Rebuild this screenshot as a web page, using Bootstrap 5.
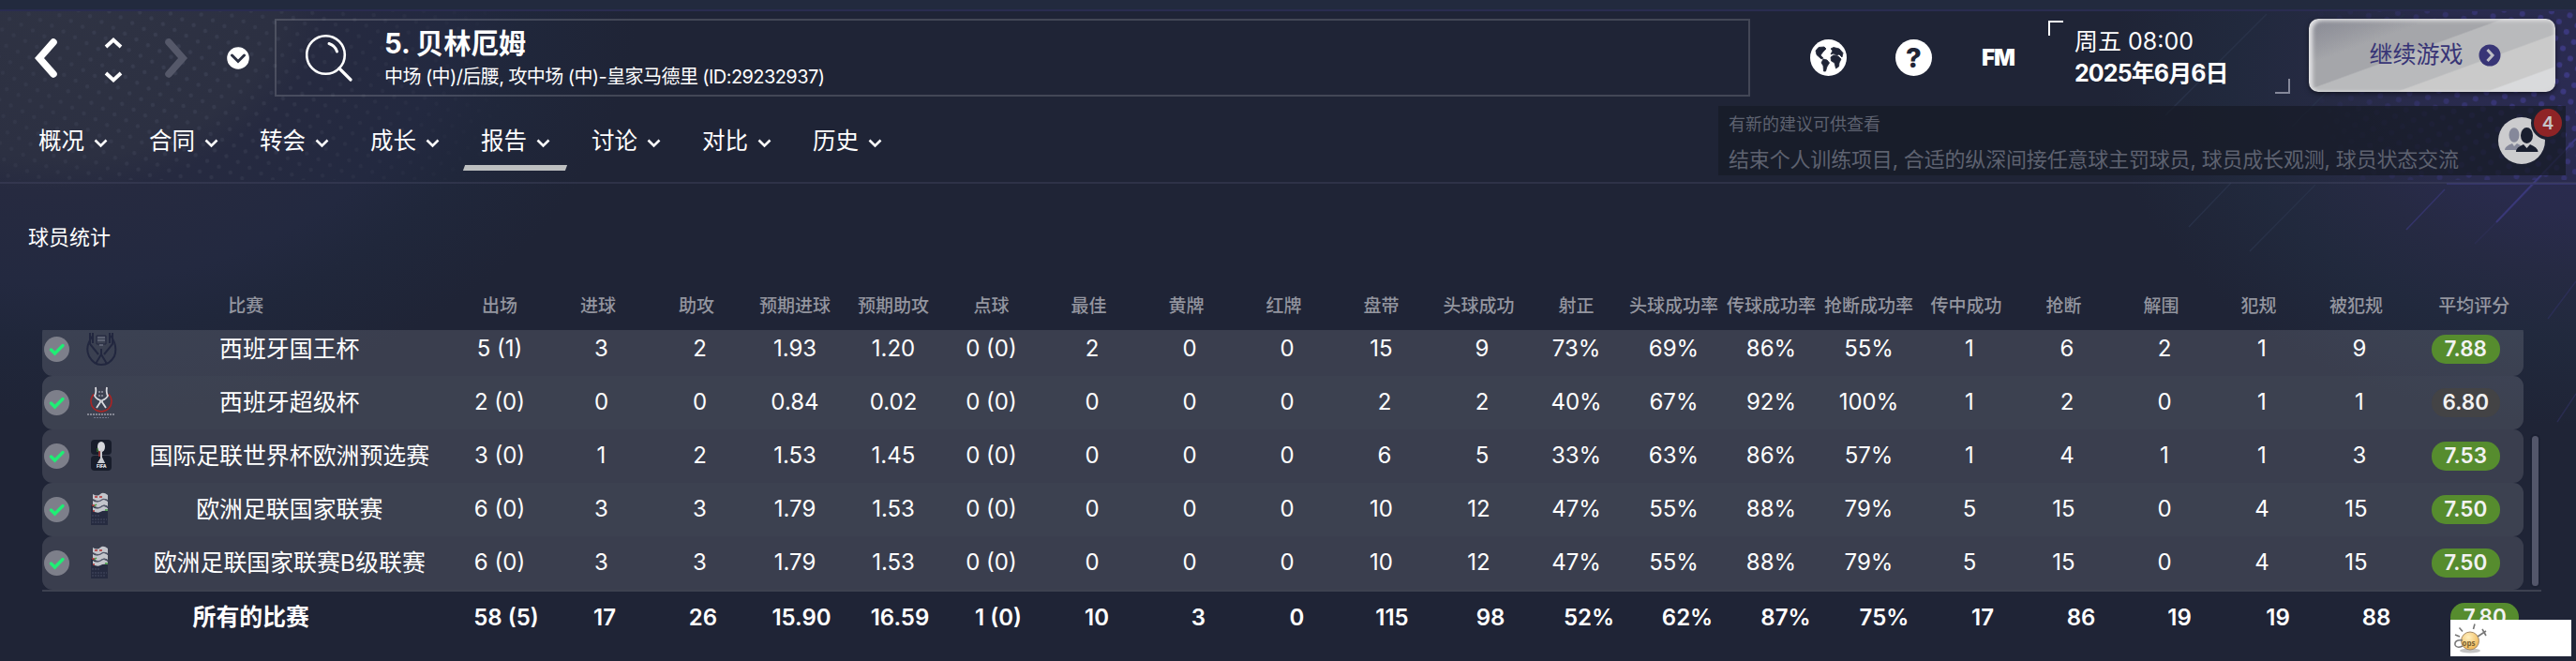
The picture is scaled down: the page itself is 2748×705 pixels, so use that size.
<!DOCTYPE html>
<html lang="zh-CN">

<head>
    <meta charset="UTF-8">
    <meta name="viewport" content="width=device-width, initial-scale=1.0">
    <title>球员统计</title>
    <link href="https://cdn.jsdelivr.net/npm/bootstrap@5.3.0/dist/css/bootstrap.min.css" rel="stylesheet">
    <style>
        body {
            width: 2748px;
            height: 705px;
            overflow: hidden;
            background-color: #1f2436;
            color: #fff;
            font-family: Inter, "Noto Sans CJK SC", sans-serif;
            font-size: 25px;
            line-height: 1;
        }

        svg {
            display: block;
            flex: none;
        }

        .backdrop {
            position: absolute;
            inset: 0;
            z-index: -1;
        }

        .top-strip {
            height: 12px;
            background: #222a3e;
            border-bottom: 2px solid #2a2c50;
        }

        .app-header {
            height: 184px;
            padding-top: 8px;
            border-bottom: 2px solid rgba(70, 72, 100, .4);
        }

        .tool-row {
            height: 83px;
            padding-left: 37px;
        }

        .icon-updown {
            margin: 4px 45px 0 50px;
        }

        .icon-history {
            margin-left: 42px;
        }

        .icon-world {
            margin: 0 52px 0 64px;
        }

        .search-box {
            width: 1574px;
            height: 83px;
            margin-left: 27px;
            padding-left: 31px;
            gap: 34px;
            border: 2px solid rgba(255, 255, 255, .16);
        }

        .player-name {
            font-size: 29.3px;
            line-height: 36px;
            font-weight: 700;
        }

        .player-info {
            font-size: 20px;
            line-height: 26px;
            margin-top: 4px;
            letter-spacing: -.58px;
        }

        .round-icon {
            width: 39px;
            height: 39px;
            border-radius: 50%;
            background: #fff;
            color: #1f2436;
            font-weight: 800;
            font-size: 29px;
        }

        .fm-logo {
            width: 38px;
            margin-left: 53px;
            font-size: 24px;
            font-weight: 900;
            letter-spacing: -1px;
        }

        .date-box {
            width: 258px;
            height: 79px;
            margin-left: 33px;
            padding: 7px 0 0 28px;
            line-height: 34px;
            position: relative;
        }

        .date-day {
            font-weight: 700;
            letter-spacing: -.9px;
        }

        .date-box::before,
        .date-box::after {
            content: '';
            position: absolute;
            width: 16px;
            height: 16px;
        }

        .date-box::before {
            left: 0;
            top: 2px;
            border-top: 2px solid #fff;
            border-left: 2px solid #fff;
        }

        .date-box::after {
            right: 0;
            bottom: -1px;
            border-right: 2px solid #85889a;
            border-bottom: 2px solid #85889a;
        }

        .btn-continue {
            width: 263px;
            height: 78px;
            margin-left: 20px;
            padding-left: 18px;
            border: 0;
            border-radius: 10px;
            color: #383576;
            font-size: 25px;
            gap: 16px;
            background: linear-gradient(160deg, #85879380 0%, #85879300 28%), linear-gradient(160deg, #8f9098 0%, #a5a6aa 28%, #a5a6aa 43%, #b9babc 44%, #b9babc 64%, #cacaca 65%, #cacaca 84%, #d9dadc 85%);
            box-shadow: inset 4px 2px 4px #e2e2e4, inset -2px -1px 3px #d8d8da, 0 2px 5px rgba(0, 0, 0, .5);
        }

        .tab-row {
            height: 91px;
            padding-left: 23px;
        }

        .tab-link {
            width: 110px;
            margin-right: 8px;
            height: 71px;
            padding-top: 23px;
            gap: 10px;
            line-height: 48px;
            font-size: 24.5px;
            color: #fff;
            position: relative;
        }

        .tab-link svg {
            margin-top: 22px;
        }

        .tab-link.active::after {
            content: '';
            position: absolute;
            left: 0;
            top: 73px;
            width: 109px;
            height: 6px;
            background: #bdbfc0;
            transform: skewX(-20deg);
        }

        .advice-box {
            width: 904px;
            height: 74px;
            margin: 10px 11px 0 auto;
            padding: 0 22px 0 11px;
            background: rgba(22, 27, 38, .72);
            color: #5e6270;
        }

        .advice-title {
            font-size: 18px;
            line-height: 30px;
            margin-top: 5px;
        }

        .advice-text {
            font-size: 22px;
            line-height: 40px;
            margin-top: 2px;
            letter-spacing: -.17px;
        }

        .staff-icon {
            position: relative;
        }

        .staff-count {
            position: absolute;
            left: 38px;
            top: -9px;
            width: 30px;
            height: 30px;
            border-radius: 50%;
            background: #8f2426;
            box-shadow: 0 0 0 3px #1d2030;
            color: #c5c5c8;
            font-size: 19px;
            font-weight: 600;
        }

        .section-title {
            font-size: 22px;
            line-height: 30px;
            padding-left: 30px;
            margin-top: 42px;
        }

        .stat-grid {
            display: grid;
            grid-template-columns: 30px 66px 339.5px repeat(5, 105px) repeat(15, 104px) 1fr;
            width: 2647px;
            align-items: center;
            text-align: center;
            white-space: nowrap;
        }

        .stat-table {
            margin-left: 45px;
        }

        .stat-head {
            height: 44px;
            margin-top: 36px;
            margin-bottom: 4px;
            font-size: 19px;
            font-weight: 500;
            color: #93959f;
        }

        .head-name {
            padding-right: 97px;
        }

        .head-rating {
            padding-left: 21px;
        }

        .stat-scroll {
            height: 277px;
            overflow: hidden;
        }

        .stat-list {
            margin-top: -8px;
            width: 2647px;
        }

        .stat-row {
            height: 57px;
            padding-bottom: 1px;
            border-radius: 11px;
            font-size: 24px;
            background: rgba(255, 255, 255, .12);
        }

        .stat-row:nth-child(even) {
            background: rgba(255, 255, 255, .133);
        }

        .comp-name {
            font-size: 24.9px;
            padding-right: 4px;
        }

        .one-digit {
            padding-left: 7px;
        }

        .rating-pill {
            display: inline-block;
            width: 73px;
            height: 31px;
            border-radius: 15px;
            background: #568c2e;
            color: #f2f2f2;
            font-size: 22.5px;
            font-weight: 600;
            line-height: 30px;
            margin-left: 3px;
        }

        .rating-pill.average {
            background: #434345;
        }

        .scroll-thumb {
            width: 7px;
            height: 160px;
            margin: 113px 0 0 9px;
            border-radius: 4px;
            background: #53566a;
            box-shadow: 0 0 0 2px #1b2032;
        }

        .stat-total {
            grid-template-columns: 442.5px repeat(20, 105px) 1fr;
            width: 2666px;
            height: 59px;
            padding-bottom: 2px;
            border-top: 2px solid #3d4150;
            font-weight: 600;
            font-size: 24px;
        }

        .stat-total .comp-name {
            font-weight: 700;
            padding: 0 0 0 3px;
        }

        .ops-tip {
            position: absolute;
            left: 2614px;
            top: 661px;
            width: 129px;
            height: 39px;
            background: #fff;
        }
    </style>
</head>

<body class="position-relative">

    <svg class="backdrop" width="2748" height="705" viewBox="0 0 2748 705">
        <defs>
            <radialGradient id="washLeft" gradientUnits="userSpaceOnUse" cx="60" cy="0" r="620" gradientTransform="scale(1 .72)">
                <stop offset="0" stop-color="#2f3343" />
                <stop offset=".38" stop-color="#2c3042" />
                <stop offset=".46" stop-color="#262a40" />
                <stop offset=".68" stop-color="#232940" />
                <stop offset=".8" stop-color="#20273b" />
                <stop offset="1" stop-color="#1f2436" />
            </radialGradient>
            <radialGradient id="glowRight" gradientUnits="userSpaceOnUse" cx="2770" cy="90" r="520" gradientTransform="translate(0 27) scale(1 .7)">
                <stop offset="0" stop-color="#2b2b53" />
                <stop offset=".38" stop-color="#292b4c" />
                <stop offset=".55" stop-color="#262a43" />
                <stop offset=".75" stop-color="#21293d" />
                <stop offset="1" stop-color="#1f2436" />
            </radialGradient>
            <radialGradient id="fadeLeft" gradientUnits="userSpaceOnUse" cx="180" cy="50" r="380">
                <stop offset="0" stop-color="#fff" />
                <stop offset="1" stop-color="#000" />
            </radialGradient>
            <radialGradient id="fadeRight" gradientUnits="userSpaceOnUse" cx="2748" cy="70" r="290">
                <stop offset=".1" stop-color="#fff" />
                <stop offset="1" stop-color="#000" />
            </radialGradient>
            <mask id="maskLeft"><rect y="12" width="700" height="180" fill="url(#fadeLeft)" /></mask>
            <mask id="maskRight"><rect x="2440" y="12" width="308" height="180" fill="url(#fadeRight)" /></mask>
            <pattern id="dotsLeft" width="21" height="18" patternUnits="userSpaceOnUse" patternTransform="rotate(-14)">
                <circle cx="5" cy="4" r="2.2" fill="#41465a" />
                <circle cx="15.5" cy="13" r="2.2" fill="#41465a" />
            </pattern>
            <pattern id="dotsRight" width="20" height="18" patternUnits="userSpaceOnUse" patternTransform="rotate(12)">
                <circle cx="5" cy="4" r="3" fill="#3c3980" />
                <circle cx="15" cy="13" r="3" fill="#3c3980" />
            </pattern>
        </defs>
        <rect width="700" height="450" fill="url(#washLeft)" />
        <rect x="2200" width="548" height="480" fill="url(#glowRight)" />
        <rect width="700" height="194" fill="url(#dotsLeft)" mask="url(#maskLeft)" opacity=".6" />
        <rect x="2440" width="308" height="194" fill="url(#dotsRight)" mask="url(#maskRight)" />
        <g stroke="#34346a" stroke-width="1.5" fill="none">
            <path d="M2748 148L2663 237" stroke="#3b397c" stroke-width="2" />
            <path d="M2608 202L2567 245" />
            <path d="M2748 152L2640 260" opacity=".3" />
            <path d="M2418 15L2310 123M2470 197L2400 268M2380 195L2335 242M2565 15L2445 135" stroke="#283148" />
            <path d="M2748 300L2718 340M2748 420L2728 450" opacity=".5" />
            <path d="M2748 196H2610" stroke-width="2" />
        </g>
    </svg>

    <div class="top-strip"></div>

    <header class="app-header">
        <div class="tool-row d-flex align-items-center">
            <svg width="24" height="42" viewBox="0 0 24 42"><path d="M20 4L5 21L20 38" fill="none" stroke="#fff" stroke-width="7.5" stroke-linecap="round" /></svg>
            <svg class="icon-updown" width="20" height="50" viewBox="0 0 20 50"><path d="M2 11L10 3.500L18 11M2 39L10 46.500L18 39" fill="none" stroke="#fff" stroke-width="3.800" /></svg>
            <svg width="24" height="42" viewBox="0 0 24 42"><path d="M4 4L19 21L4 38" fill="none" stroke="#555869" stroke-width="7.5" stroke-linecap="round" /></svg>
            <svg class="icon-history" width="24" height="24" viewBox="0 0 24 24"><circle cx="12" cy="12" r="11.800" fill="#fff" /><path d="M5.500 9L12 15.500L18.500 9" fill="none" stroke="#2b3042" stroke-width="3" stroke-linecap="round" /></svg>

            <div class="search-box d-flex align-items-center">
                <svg width="50" height="51" viewBox="0 0 50 51">
                    <circle cx="21.500" cy="22.500" r="20.300" fill="none" stroke="#fff" stroke-width="2.600" />
                    <path d="M36 37L48 49" stroke="#fff" stroke-width="3.200" stroke-linecap="round" />
                    <path d="M25 10.500Q31.500 12.500 33.500 19" fill="none" stroke="#fff" stroke-width="3" stroke-linecap="round" />
                </svg>
                <div>
                    <div class="player-name">5. 贝林厄姆</div>
                    <div class="player-info">中场 (中)/后腰, 攻中场 (中)-皇家马德里 (ID:29232937)</div>
                </div>
            </div>

            <svg class="icon-world" width="39" height="39" viewBox="0 0 39 39">
                <circle cx="19.500" cy="19.500" r="19.500" fill="#fff" />
                <path d="M6 12L9 8.500L15 8L17 10L14 13L12.500 15L11 17L14 20L12 21L7 16.500ZM14 21L18 22L20.500 25L18 29L16.500 34L14.500 34L14 28L12 25ZM22 10L25 8.500L31 10L35 14.500L34 19L31 16L28 17L25 15L22 16L24 12ZM22 19L25 16.800L30 18L33 21L31 25L30.500 29L27.500 31L26 25L22.500 23Z" fill="#1f2436" stroke="#1f2436" stroke-width=".8" stroke-linejoin="round" />
            </svg>
            <div class="round-icon d-flex align-items-center justify-content-center">?</div>
            <div class="fm-logo">FM</div>
            <div class="date-box align-self-start">
                <div>周五 08:00</div>
                <div class="date-day">2025年6月6日</div>
            </div>
            <button type="button" class="btn btn-continue d-flex align-items-center justify-content-center align-self-start">
                继续游戏
                <svg width="24" height="24" viewBox="0 0 24 24"><circle cx="12" cy="12" r="11.500" fill="#383576" /><path d="M9.500 6L15 12L9.500 18" fill="none" stroke="#bcbcc4" stroke-width="3" /></svg>
            </button>
        </div>

        <div class="tab-row d-flex">
            <nav class="d-flex" id="tabs"></nav>
            <div class="advice-box d-flex justify-content-between">
                <div>
                    <div class="advice-title">有新的建议可供查看</div>
                    <div class="advice-text">结束个人训练项目, 合适的纵深间接任意球主罚球员, 球员成长观测, 球员状态交流</div>
                </div>
                <div class="staff-icon align-self-center">
                    <svg width="50" height="50" viewBox="0 0 50 50">
                        <circle cx="25" cy="25" r="25" fill="#ccccce" />
                        <ellipse cx="17" cy="19" rx="5.500" ry="7.800" fill="#85889a" />
                        <path d="M7 35Q7 31 15 28L17 31L20 28L24 30L20 35Z" fill="#85889a" />
                        <ellipse cx="30.500" cy="19.500" rx="6.500" ry="8.500" fill="#191e2e" />
                        <path d="M19 37Q19 32 27 29L30.500 33L34 29Q42 32 42.500 37Z" fill="#191e2e" />
                    </svg>
                    <span class="staff-count d-flex align-items-center justify-content-center">4</span>
                </div>
            </div>
        </div>
    </header>

    <main>
        <div class="section-title">球员统计</div>

        <div class="stat-table">
            <div class="stat-grid stat-head" id="statHead"></div>
            <div class="stat-scroll d-flex">
                <div class="stat-list" id="statList"></div>
                <div class="scroll-thumb"></div>
            </div>
            <div class="stat-grid stat-total" id="statTotal"></div>
        </div>
    </main>

    <div class="ops-tip">
        <svg width="45" height="39" viewBox="0 0 45 39">
            <defs>
                <radialGradient id="bulb" cx=".4" cy=".3" r=".7">
                    <stop offset="0" stop-color="#fff0c0" />
                    <stop offset="1" stop-color="#f0b757" />
                </radialGradient>
            </defs>
            <ellipse cx="21" cy="33" rx="11" ry="2.500" fill="#c4c4c4" />
            <circle cx="21" cy="22.500" r="9.500" fill="url(#bulb)" stroke="#a48b6a" />
            <path d="M5 16L10 18M9.500 8.500L13 12.500M26 4.500L24.500 10M29 18L38 12M34 10L38 17" stroke="#777" stroke-width="1.600" fill="none" />
            <path d="M13 22Q4 21 5 27Q7 31 13 28" stroke="#777" stroke-width="1.500" fill="none" />
            <text x="12.500" y="28" font-size="8" font-weight="700" fill="#7a6232" font-family="Open Sans">ops</text>
        </svg>
    </div>

    <script src="https://cdn.jsdelivr.net/npm/bootstrap@5.3.0/dist/js/bootstrap.bundle.min.js"></script>
    <script>
        const tabs = ['概况', '合同', '转会', '成长', '报告', '讨论', '对比', '历史'];

        const columns = ['出场', '进球', '助攻', '预期进球', '预期助攻', '点球', '最佳', '黄牌', '红牌', '盘带', '头球成功', '射正',
            '头球成功率', '传球成功率', '抢断成功率', '传中成功', '抢断', '解围', '犯规', '被犯规'];

        const rows = [
            ['copa', '西班牙国王杯', '5 (1)|3|2|1.93|1.20|0 (0)|2|0|0|15|9|73%|69%|86%|55%|1|6|2|1|9', '7.88'],
            ['super', '西班牙超级杯', '2 (0)|0|0|0.84|0.02|0 (0)|0|0|0|2|2|40%|67%|92%|100%|1|2|0|1|1', '6.80'],
            ['fifa', '国际足联世界杯欧洲预选赛', '3 (0)|1|2|1.53|1.45|0 (0)|0|0|0|6|5|33%|63%|86%|57%|1|4|1|1|3', '7.53'],
            ['nations', '欧洲足联国家联赛', '6 (0)|3|3|1.79|1.53|0 (0)|0|0|0|10|12|47%|55%|88%|79%|5|15|0|4|15', '7.50'],
            ['nations', '欧洲足联国家联赛B级联赛', '6 (0)|3|3|1.79|1.53|0 (0)|0|0|0|10|12|47%|55%|88%|79%|5|15|0|4|15', '7.50']
        ];

        const total = '58 (5)|17|26|15.90|16.59|1 (0)|10|3|0|115|98|52%|62%|87%|75%|17|86|19|19|88';

        const crests = {
            copa: '<g fill="none" stroke="#22273f" stroke-width="2"><path d="M8 4Q-1 16 4 26Q9 35 17 35Q26 35 31 26Q35 15 27 4"/><path d="M5 1V13L14 24M29 1V13L20 24M8 1V12M26 1V12M17 18V24L11 34M17 24L23 34"/><path d="M12 4H22V13H12Z" stroke-width="1"/></g><path d="M13 6H21M13 9H21M15 14H19" stroke="#686c7e" stroke-width="1.500"/>',
            super: '<circle cx="17" cy="17" r="11" fill="none" stroke="#a82525" stroke-width="1.600"/><path d="M9 1H25V10H9Z" fill="#3c4050"/><path d="M11 2Q12 8 10 11Q11 14 16 16V18L12 24M23 2Q22 8 24 11Q23 14 18 16V18L22 24" fill="none" stroke="#dadbe0" stroke-width="1.800"/><path d="M14 7H20M14 11H20" stroke="#9497a3" stroke-width="1.500" stroke-dasharray="2 1"/><path d="M2 31H32" stroke="#9a9ca8" stroke-width="1.600" stroke-dasharray="2 1"/><path d="M9 34.500H25" stroke="#73768a" stroke-width="1" stroke-dasharray="2 1"/>',
            fifa: '<rect x="6" y="1" width="22" height="16" rx="4" fill="#181d2b"/><rect x="6" y="18" width="22" height="16" rx="4" fill="#181d2b"/><ellipse cx="17" cy="8.500" rx="4" ry="5.500" fill="#d5d7dc"/><path d="M17 12V21L14.500 25H19.500L17 20" stroke="#c8cad0" stroke-width="2" fill="#c8cad0"/><path d="M15 13V19" stroke="#a33" stroke-width="1.500"/><path d="M13 10V14" stroke="#4a9a3a" stroke-width="1"/><text x="12" y="31" font-size="5" font-weight="800" fill="#e8e8ec">FIFA</text>',
            nations: '<rect x="6" y="14" width="18" height="21" fill="#262b40"/><path d="M8 2Q13 5 16 2T24 3V8Q20 6 17 9T8 7ZM8 9Q13 12 16 9T24 10V15Q20 12 17 15T8 14ZM8 16Q13 19 16 16T24 17V20Q19 19 16 21T8 20Z" fill="#c3c5cb"/><path d="M9 8Q14 11 17 8.500T24 9M9 15Q14 18 17 15.500T24 16" stroke="#555a6c" stroke-width="1.200" fill="none"/><path d="M10 5H20" stroke="#b23030" stroke-width="1.500" stroke-dasharray="3 2"/><path d="M9 15L12 13M21 19H24" stroke="#3c9a3c" stroke-width="1.500"/><path d="M7 14H10M8 20H10" stroke="#a33" stroke-width="1.500"/><path d="M7 25H15M7 29H23M7 32H21" stroke="#454a60" stroke-width="1" stroke-dasharray="2 1"/>'
        };

        const check = '<svg width="27" height="27" viewBox="0 0 27 27" class="mx-auto"><circle cx="13.500" cy="13.500" r="13.500" fill="#7d7f8a"/><path d="M7.500 14L11.500 18L20 9.500" fill="none" stroke="#1fee74" stroke-width="3.400" stroke-linecap="round"/></svg>';

        function cells(line) {
            return line.split('|').map(v => `<div class="${v.length === 1 ? 'one-digit' : ''}">${v}</div>`).join('');
        }

        document.getElementById('tabs').innerHTML = tabs.map(t =>
            `<a class="tab-link d-flex justify-content-center text-decoration-none ${t === '报告' ? 'active' : ''}">${t}
                <svg width="15" height="10" viewBox="0 0 15 10"><path d="M1.500 1.500L7.500 7.500L13.500 1.500" fill="none" stroke="#fff" stroke-width="2.600"/></svg></a>`
        ).join('');

        document.getElementById('statHead').innerHTML = '<div></div><div></div><div class="head-name">比赛</div>'
            + columns.map(c => `<div>${c}</div>`).join('') + '<div class="head-rating">平均评分</div>';

        document.getElementById('statList').innerHTML = rows.map(([crest, name, line, rating]) =>
            `<div class="stat-grid stat-row">
                <div>${check}</div>
                <div><svg width="34" height="36" viewBox="0 0 34 36" class="mx-auto">${crests[crest]}</svg></div>
                <div class="comp-name">${name}</div>
                ${cells(line)}
                <div><span class="rating-pill ${rating < 7 ? 'average' : ''}">${rating}</span></div>
            </div>`
        ).join('');

        document.getElementById('statTotal').innerHTML = `<div class="comp-name">所有的比赛</div>${cells(total)}<div><span class="rating-pill">7.80</span></div>`;
    </script>

</body>

</html>
